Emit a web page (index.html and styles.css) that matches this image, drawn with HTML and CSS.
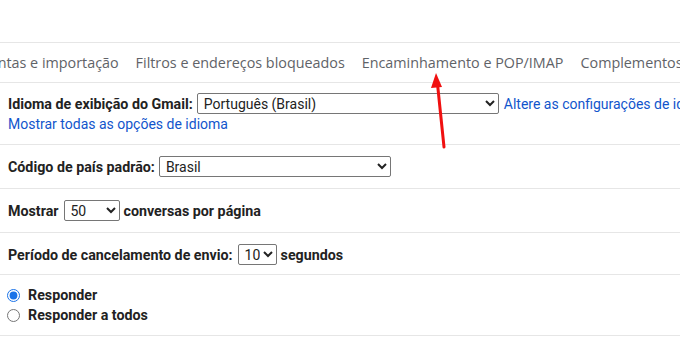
FILE: index.html
```html
<!DOCTYPE html>
<html lang="pt-BR">
<head>
  <meta charset="UTF-8">
  <title>Configurações</title>
  <link rel="stylesheet" href="styles.css">
</head>
<body>
  <div class="page">
    <div class="top"></div>

    <nav class="tabs">
      <span class="tab first">Contas e importação</span>
      <span class="tab">Filtros e endereços bloqueados</span>
      <span class="tab">Encaminhamento e POP/IMAP</span>
      <span class="tab">Complementos</span>
      <span class="tab">Bate-papo e Meet</span>
    </nav>

    <div class="row lang">
      <div class="line">
        <span class="label">Idioma de exibição do Gmail:</span>
        <select class="sel sel-lang">
          <option>Português (Brasil)</option>
        </select>
        <a class="link" href="#">Altere as configurações de idioma para outros produtos do Google</a>
      </div>
      <a class="link more" href="#">Mostrar todas as opções de idioma</a>
    </div>

    <div class="row">
      <span class="label">Código de país padrão:</span>
      <select class="sel sel-country">
        <option>Brasil</option>
      </select>
    </div>

    <div class="row">
      <span class="label">Mostrar</span>
      <select class="sel sel-page">
        <option>50</option>
      </select>
      <span class="label">conversas por página</span>
    </div>

    <div class="row short">
      <span class="label">Período de cancelamento de envio:</span>
      <select class="sel sel-undo">
        <option>10</option>
      </select>
      <span class="label">segundos</span>
    </div>

    <div class="row radios">
      <label class="radio"><input type="radio" name="reply" checked> <span class="label">Responder</span></label>
      <label class="radio"><input type="radio" name="reply"> <span class="label">Responder a todos</span></label>
    </div>

    <!-- seta vermelha apontando para a aba -->
    <svg class="arrow" width="680" height="342" viewBox="0 0 680 342">
      <line x1="444" y1="147" x2="437.5" y2="84" stroke="#f01010" stroke-width="3" stroke-linecap="round"/>
      <polygon points="436,73 431,88 442,87" fill="#f01010"/>
    </svg>
  </div>
</body>
</html>
```

FILE: styles.css
```css
body {
  margin: 0;
  font-family: Roboto, 'Liberation Sans', Arial, sans-serif;
  font-size: 14px;
  color: #222;
  background: #fff;
  overflow: hidden;
}

.page {
  position: relative;
  width: 680px;
  height: 342px;
  overflow: hidden;
}

.top {
  height: 42px;
  border-bottom: 1px solid #e6e6e6;
}

.tabs {
  display: flex;
  align-items: center;
  gap: 17px;
  height: 39px;
  margin-left: -20px;
  border-bottom: 1px solid #e6e6e6;
  white-space: nowrap;
}

.tab {
  font-family: 'Open Sans', Roboto, sans-serif;
  font-size: 14.35px;
  color: #5f6368;
  flex-shrink: 0;
}

.row {
  display: flex;
  align-items: center;
  gap: 4px;
  padding: 11px 8px;
  height: 21px;
  border-bottom: 1px solid #e6e6e6;
  white-space: nowrap;
}

.row.short {
  padding: 11px 8px 9px;
}

.row.lang {
  display: block;
  height: auto;
  padding: 10px 8px 10px;
}

.line {
  display: flex;
  align-items: center;
  gap: 4px;
  height: 21px;
}

.lang > .more {
  display: block;
  line-height: 20px;
  margin-left: 0;
}

.label {
  font-weight: bold;
  font-size: 14.25px;
  color: #222;
  flex-shrink: 0;
}

.link {
  color: #15c;
  text-decoration: none;
  margin-left: 1px;
}

.sel {
  flex-shrink: 0;
  height: 21px;
  font-family: Roboto, 'Liberation Sans', Arial, sans-serif;
  font-size: 14px;
  color: #222;
  background: #fff;
  border: 1px solid #767676;
  border-radius: 2px;
  padding: 0 0 0 2px;
  margin: 0;
}

.sel-lang { width: 302px; }
.sel-country { width: 232px; }
.sel-page { width: 56px; margin-left: 1px; }
.sel-undo { width: 39px; margin-left: 1px; }

.radios {
  display: block;
  height: auto;
  padding: 10px 7px;
}

.radio {
  display: flex;
  align-items: center;
  gap: 8px;
  height: 20px;
}

.radio input {
  width: 13px;
  height: 13px;
  margin: 0;
  accent-color: #1a73e8;
}

.arrow {
  position: absolute;
  left: 0;
  top: 0;
  pointer-events: none;
}
```
